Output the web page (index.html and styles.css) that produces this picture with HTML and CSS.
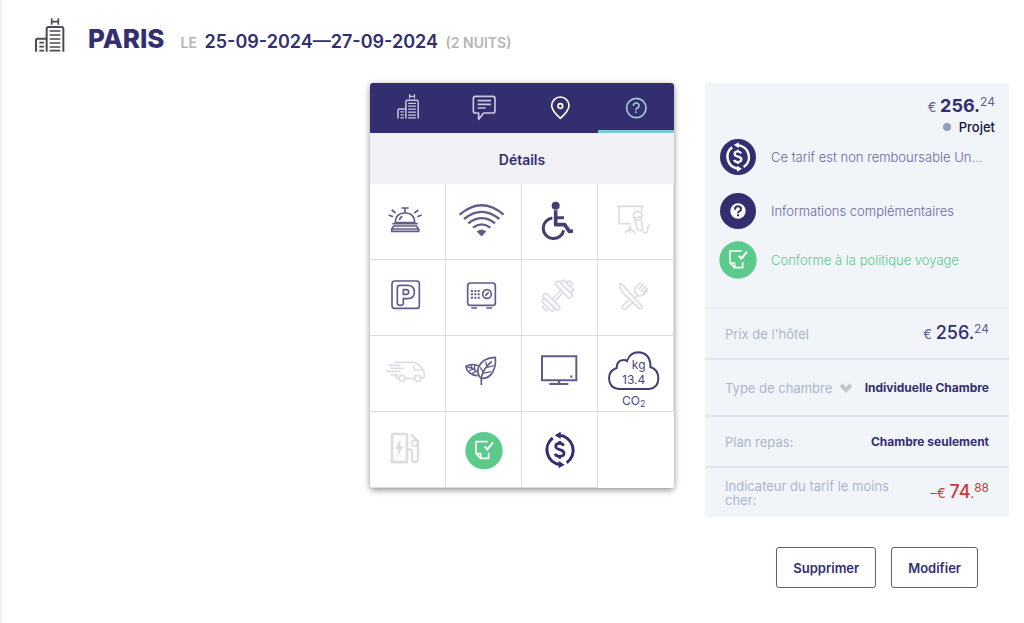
FILE: index.html
```html
<!DOCTYPE html>
<html lang="fr">
<head>
<meta charset="utf-8">
<meta name="viewport" content="width=device-width, initial-scale=1">
<title>Paris – Hôtel</title>
<link rel="stylesheet" href="styles.css">
</head>
<body>
<svg class="defs" aria-hidden="true">
  <defs>
    <g id="hotel" fill="none" stroke="currentColor">
      <path stroke-width="5" d="M155 55v19M175 55v19M155 65h20"/>
      <path stroke-width="6" d="M140 155V87q0-6 6-6h38q6 0 6 6v68M108 155v-34q0-5 5-5h27"/>
      <path stroke-width="5" d="M149 93h32M149 105h32M149 117h32M149 129h32M149 141h32M149 152h32M118 128h14M118 140h14M118 152h14"/>
    </g>
    <g id="refund" fill="none" stroke="currentColor">
      <path stroke-width="9" d="M98 309A45 45 0 0 0 120 389M117 301A45 45 0 0 1 140 383"/>
      <path fill="currentColor" stroke="none" d="M104 301l18-11v22zM134 389l-18-11v22z"/>
      <path stroke-width="8" d="M131 332q-3-7-12-7-12 0-12 9 0 7 12 10 13 3 13 11 0 9-13 9-11 0-14-8M119 318v8M119 363v8"/>
    </g>
    <g id="policy">
      <circle cx="357" cy="347" r="56" fill="#5bca8b" stroke="none"/>
      <path fill="none" stroke="#fff" stroke-width="5" stroke-linejoin="round" d="M368 320h-35v36l14 14h24v-17M333 356h14v14"/>
      <path fill="none" stroke="#fff" stroke-width="6" d="M359 334l8 9 17-21"/>
    </g>
  </defs>
</svg>

<div class="page">
  <header class="trip">
    <svg class="trip-icon" viewBox="105 52 90 106" aria-hidden="true"><use href="#hotel"/></svg>
    <h1 class="trip-city">PARIS</h1>
    <p class="trip-dates"><span class="muted">LE</span> <strong>25-09-2024—27-09-2024</strong> <span class="muted">(2 NUITS)</span></p>
  </header>

  <main class="content">
    <section class="card">
      <nav class="tabs">
        <button class="tab" type="button" aria-label="Hôtel">
          <svg viewBox="30 24 228 150"><use href="#hotel" transform="translate(34 16) scale(.74)"/></svg>
        </button>
        <button class="tab" type="button" aria-label="Commentaires">
          <svg viewBox="258 24 228 150" fill="none" stroke="currentColor" stroke-width="5"><path stroke-linejoin="round" d="M346 64h52q7 0 7 7v36q0 7-7 7h-27l-15 19v-19h-10q-6 0-6-7V71q0-7 6-7z"/><path d="M353 77h40M353 88h40M353 99h24"/></svg>
        </button>
        <button class="tab tab-bright" type="button" aria-label="Carte">
          <svg viewBox="486 24 228 150" fill="none" stroke="currentColor" stroke-width="5"><path stroke-linejoin="round" d="M601 130q-26-24-26-38a26 26 0 0 1 52 0q0 14-26 38z"/><circle cx="601" cy="93" r="7"/></svg>
        </button>
        <button class="tab tab-active" type="button" aria-label="Détails">
          <svg viewBox="714 24 228 150" fill="none" stroke="currentColor" stroke-width="5"><circle cx="829" cy="99" r="29"/><path d="M820 93q0-9 9-9 8 0 8 8 0 5-5 7-4 2-4 7M828 109v5"/></svg>
        </button>
      </nav>
      <h2 class="card-title">Détails</h2>
      <ul class="amenities">
        <li class="cell"><svg viewBox="15 12 225 225" role="img" aria-label="Réception"><path d="M91 128q0-29 29-29t29 29zM82 131h76M109 84h22M120 84v14M80 154v-7l6-9h68l7 9v7zM80 147h81M103 120q2-7 9-11M71 105l13 5M80 90l12 9M170 105l-13 5M160 90l-12 9"/></svg></li>
        <li class="cell"><svg viewBox="243 12 225 225" role="img" aria-label="Wi-Fi"><path stroke-width="7" d="M284 104q66-56 132 0M297 117q53-43 106 0M310 130q40-31 80 0M324 143q26-20 52 0"/><path fill="currentColor" d="M339 155q11-8 21 0l-10 11z"/></svg></li>
        <li class="cell dark"><svg viewBox="6 12 225 225" role="img" aria-label="Accès handicapé"><circle cx="107" cy="77" r="12" fill="currentColor" stroke="none"/><path stroke-width="11" stroke-linejoin="round" d="M107 91v43h27l14 20 11-1"/><path stroke-width="9" d="M107 113h25"/><path stroke-width="9" d="M97 114A31 31 0 1 0 131 151"/></svg></li>
        <li class="cell off"><svg viewBox="234 12 225 225" role="img" aria-label="Salle de conférence"><path d="M290 79h80M297 79v46q0 6 6 6h30M365 79v13M330 137v22M314 159l16-14 16 14"/><circle cx="353" cy="107" r="13"/><path d="M340 112q11 4 25-4M345 120l7 29q10 5 16-3l-5-27M367 152q3 8 10 7 6-2 6-12 0-12 8-12"/></svg></li>
        <li class="cell"><svg viewBox="15 240 225 225" role="img" aria-label="Parking"><rect x="81" y="303" width="82" height="82" rx="8"/><path d="M97 370v-47q0-7 7-7h23q21 0 21 20t-21 20h-12v14q0 6-9 6t-9-6zM115 329h9q7 0 7 7t-7 7h-9z"/></svg></li>
        <li class="cell"><svg viewBox="243 240 225 225" role="img" aria-label="Coffre-fort"><rect x="308" y="309" width="83" height="67" rx="8"/><circle cx="366" cy="342" r="13"/><path d="M361 347l10-10M319 384h17M364 384h17"/><path stroke-width="6" stroke-dasharray="6 4" d="M318 333h27M318 343h27M318 353h27"/></svg></li>
        <li class="cell off"><svg viewBox="6 240 225 225" role="img" aria-label="Salle de sport"><g transform="rotate(-45 113 347)"><rect x="80" y="315" width="14" height="64" rx="7"/><rect x="67" y="324" width="13" height="46" rx="6"/><path d="M94 342h38M94 352h38M67 339h-7q-4 0-4 4v8q0 4 4 4h7M159 339h7q4 0 4 4v8q0 4-4 4h-7"/><rect x="132" y="315" width="14" height="64" rx="7"/><rect x="146" y="324" width="13" height="46" rx="6"/></g></svg></li>
        <li class="cell off"><svg viewBox="234 240 225 225" role="img" aria-label="Restaurant"><path d="M300 310q-2 17 11 31l47 45q8 2 8-7l-42-47-19-20q-4-3-5-2zM331 354l-24 25q-1 9 9 9l25-24M346 353l6-6q14 3 19-4l12-12M344 337q-2-12 6-18l13-13M371 311l-16 17M378 318l-16 17M384 324l-15 15M344 337l10 9"/></svg></li>
        <li class="cell off"><svg viewBox="15 3 225 225" role="img" aria-label="Navette"><path d="M89 82h54q17 2 26 16 9 9 9 18v8q0 6-10 6M147 130h-26M101 130q-9 0-9-9M147 92v8q0 5 6 5h22M69 91h36M77 100h41M62 109h45M78 119h20"/><circle cx="111" cy="130" r="9"/><circle cx="158" cy="130" r="9"/></svg></li>
        <li class="cell"><svg viewBox="243 3 225 225" role="img" aria-label="Écologique"><path d="M349 150v-22q4-25 31-49M349 130C329 116 335 70 391 67 394 100 380 132 349 130z"/><path d="M338 122C318 120 305 111 303 94 316 87 332 88 343 94"/><path stroke-width="4" d="M307 96q18 3 29 15M354 110l-8-13M366 94l-4-14M352 115l26-5M364 98l22-6M317 90l5 10M328 90l2 15M312 108l11-5M322 116l9-6"/></svg></li>
        <li class="cell"><svg viewBox="6 3 225 225" role="img" aria-label="Télévision"><path stroke-width="6" d="M66 64h103v72H66zM88 147h57"/><path stroke-width="7" d="M117 136v11M151 125h6"/></svg></li>
        <li class="cell"><svg viewBox="234 3 225 225" role="img" aria-label="13.4 kg CO2"><path stroke="#443f72" stroke-width="6" d="M296 162q-28-2-29-32 0-24 23-31 0-23 20-24 7-1 11 3 10-26 34-26 31 1 36 33v11q24 8 24 34 0 29-27 32z"/><g class="co2" text-anchor="middle"><text x="356" y="101">kg</text><text x="341" y="148">13.4</text><text x="341" y="210">CO<tspan font-size="27" dy="6">2</tspan></text></g></svg></li>
        <li class="cell off"><svg viewBox="15 231 225 225" role="img" aria-label="Borne de recharge"><rect x="81" y="297" width="45" height="84" rx="5" stroke-width="8"/><path stroke-width="7" d="M76 381h53M126 343h8q7 0 7 8v22q0 8 9 8t9-9v-53l-22-21"/><circle cx="149" cy="325" r="9" stroke-width="5"/><path fill="currentColor" stroke="none" d="M107 311l-17 32h11l-5 24 20-34h-11z"/></svg></li>
        <li class="cell"><svg viewBox="243 231 225 225" role="img" aria-label="Conforme à la politique voyage"><use href="#policy"/></svg></li>
        <li class="cell strong"><svg viewBox="6 231 225 225" role="img" aria-label="Non remboursable"><use href="#refund"/></svg></li>
        <li class="cell empty"></li>
      </ul>
    </section>

    <aside class="side">
      <section class="panel">
        <div class="summary">
          <p class="price price-total">€ <b>256.</b><sup>24</sup></p>
          <p class="status"><span class="dot"></span>Projet</p>
          <ul class="notes">
            <li class="note">
              <svg class="note-icon" viewBox="0 0 114 114" aria-hidden="true"><circle cx="57" cy="57" r="54" fill="#332e6f"/><use href="#refund" class="white" transform="translate(-41 -221) scale(.82 .805)"/></svg>
              <span>Ce tarif est non remboursable Un...</span>
            </li>
            <li class="note note-info">
              <svg class="note-icon" viewBox="0 0 114 114" aria-hidden="true"><circle cx="57" cy="57" r="54" fill="#332e6f"/><circle cx="57" cy="57" r="23" fill="#fff"/><path fill="none" stroke="#332e6f" stroke-width="6" d="M48 53q0-10 9-10t9 8q0 5-5 7-4 2-4 6M57 67v6"/></svg>
              <span>Informations complémentaires</span>
            </li>
            <li class="note note-ok">
              <svg class="note-icon" viewBox="300 290 114 114" aria-hidden="true"><use href="#policy"/></svg>
              <span>Conforme à la politique voyage</span>
            </li>
          </ul>
        </div>
        <dl class="details">
          <div class="row">
            <dt>Prix de l'hôtel</dt>
            <dd class="price">€ <b>256.</b><sup>24</sup></dd>
          </div>
          <div class="row row-tall">
            <dt><button class="expand" type="button">Type de chambre <svg viewBox="0 0 12 10" aria-hidden="true"><path fill="none" stroke="#c3c5cb" stroke-width="4" d="M1 2l5 5 5-5"/></svg></button></dt>
            <dd>Individuelle Chambre</dd>
          </div>
          <div class="row">
            <dt>Plan repas:</dt>
            <dd>Chambre seulement</dd>
          </div>
          <div class="row">
            <dt>Indicateur du tarif le moins cher:</dt>
            <dd class="price price-low">–€ <b>74<small>.</small></b><sup>88</sup></dd>
          </div>
        </dl>
      </section>
      <div class="actions">
        <button class="btn" type="button">Supprimer</button>
        <button class="btn" type="button">Modifier</button>
      </div>
    </aside>
  </main>
</div>
</body>
</html>
```
FILE: styles.css
```css
* { box-sizing: border-box; }

body {
  margin: 0;
  background: #fff;
  color: #332e6f;
  font: 13px/16px Inter, "Open Sans", sans-serif;
}

h1, h2, p, ul, dl, dd { margin: 0; padding: 0; }
ul { list-style: none; }
button { font: inherit; color: inherit; background: none; border: 0; padding: 0; cursor: pointer; }

.defs { position: absolute; width: 0; height: 0; }

.page {
  min-height: 100vh;
  border-left: 2px solid #eff3f9;
  padding: 17px 15px 32px 33px;
}

/* Trip heading */
.trip { display: flex; align-items: baseline; height: 66px; }
.trip-icon { width: 30px; height: 36px; color: #4b4c52; align-self: flex-start; }
.trip-city { margin-left: 23px; font-size: 26px; line-height: 44px; font-weight: 800; }
.trip-dates { margin-left: 16px; font-size: 18px; font-weight: 600; }
.trip-dates strong { margin: 0 3px; font-weight: 600; }
.muted { color: #b5b5b5; font-size: 14px; font-weight: 600; }

.content { display: flex; justify-content: flex-end; align-items: flex-start; gap: 31px; }

/* Amenities card */
.card {
  flex: 0 1 304px;
  border-radius: 3px;
  overflow: hidden;
  box-shadow: 0 2px 6px rgba(0, 0, 0, .45);
}
.tabs { display: grid; grid-template-columns: repeat(4, 1fr); background: #332e6f; }
.tab { height: 50px; color: #c9c6e0; }
.tab svg { display: block; width: 100%; height: 50px; }
.tab-bright { color: #fff; }
.tab-active { color: #9fc6d6; box-shadow: inset 0 -3px #7cc9cf; }
.card-title {
  background: #f1f2f5;
  font-size: 14px;
  line-height: 16px;
  font-weight: 600;
  text-align: center;
  padding: 19px 0 16px;
}
.amenities { display: grid; grid-template-columns: repeat(4, 1fr); background: #fff; }
.cell {
  height: 76px;
  border: solid #dcdcdf;
  border-width: 0 1px 1px 0;
  color: #5f5b8a;
}
.cell svg {
  display: block;
  width: 100%;
  height: 75px;
  fill: none;
  stroke: currentColor;
  stroke-width: 5;
}
.off { color: #dddce5; }
.dark { color: #443f72; }
.strong { color: #332e6f; }
.empty { border-color: transparent; }
.co2 { fill: #4b4680; stroke: none; font-size: 36px; }

/* Fare panel */
.side { flex: 0 1 304px; }
.panel { background: #f1f5fa; }
.summary { padding: 12px 14px 29px; }
.price { font-size: 13px; line-height: 22px; white-space: nowrap; color: #5f5b95; font-weight: 400; text-align: right; }
.price b { font-size: 18px; font-weight: 500; color: #332e6f; }
.price sup { font-size: 12px; line-height: 0; vertical-align: 6px; }
.price-total b { font-weight: 700; }
.status { display: flex; justify-content: flex-end; align-items: center; gap: 8px; padding-top: 1px; color: #17133c; font-weight: 500; }
.dot { width: 8px; height: 8px; border-radius: 50%; background: #8d9fbc; }

.notes { padding-top: 3px; }
.note { display: flex; align-items: center; gap: 14px; color: #6b679d; font-weight: 300; white-space: nowrap; }
.note-info { margin-top: 16px; }
.note-ok { margin-top: 11px; color: #5bca8b; }
.note-icon { flex: none; width: 38px; height: 38px; }
.white { color: #fff; }

.row {
  display: flex;
  align-items: center;
  justify-content: space-between;
  gap: 12px;
  min-height: 51px;
  padding: 0 20px;
  border-top: 2px solid #dfe5f2;
}
.row:first-child { border-top-width: 1px; min-height: 50px; }
.row-tall { min-height: 57px; }
.row dt { color: #adb5cb; line-height: 14px; }
.row dd { flex: none; font-size: 12px; font-weight: 700; color: #332e6f; }
.row dd.price { font-size: 13px; font-weight: 400; color: #5f5b95; }
.row dd.price-low, .price-low b { color: #cb3a35; }
.price-low small { font-size: 12px; }
.expand { display: flex; align-items: center; gap: 8px; white-space: nowrap; }
.expand svg { width: 12px; height: 10px; }

.actions { display: flex; justify-content: flex-end; gap: 15px; padding: 30px 31px 0 0; }
.btn {
  height: 41px;
  padding: 0 16px;
  border: 1px solid #5f5b95;
  border-radius: 3px;
  font-weight: 600;
}
```
